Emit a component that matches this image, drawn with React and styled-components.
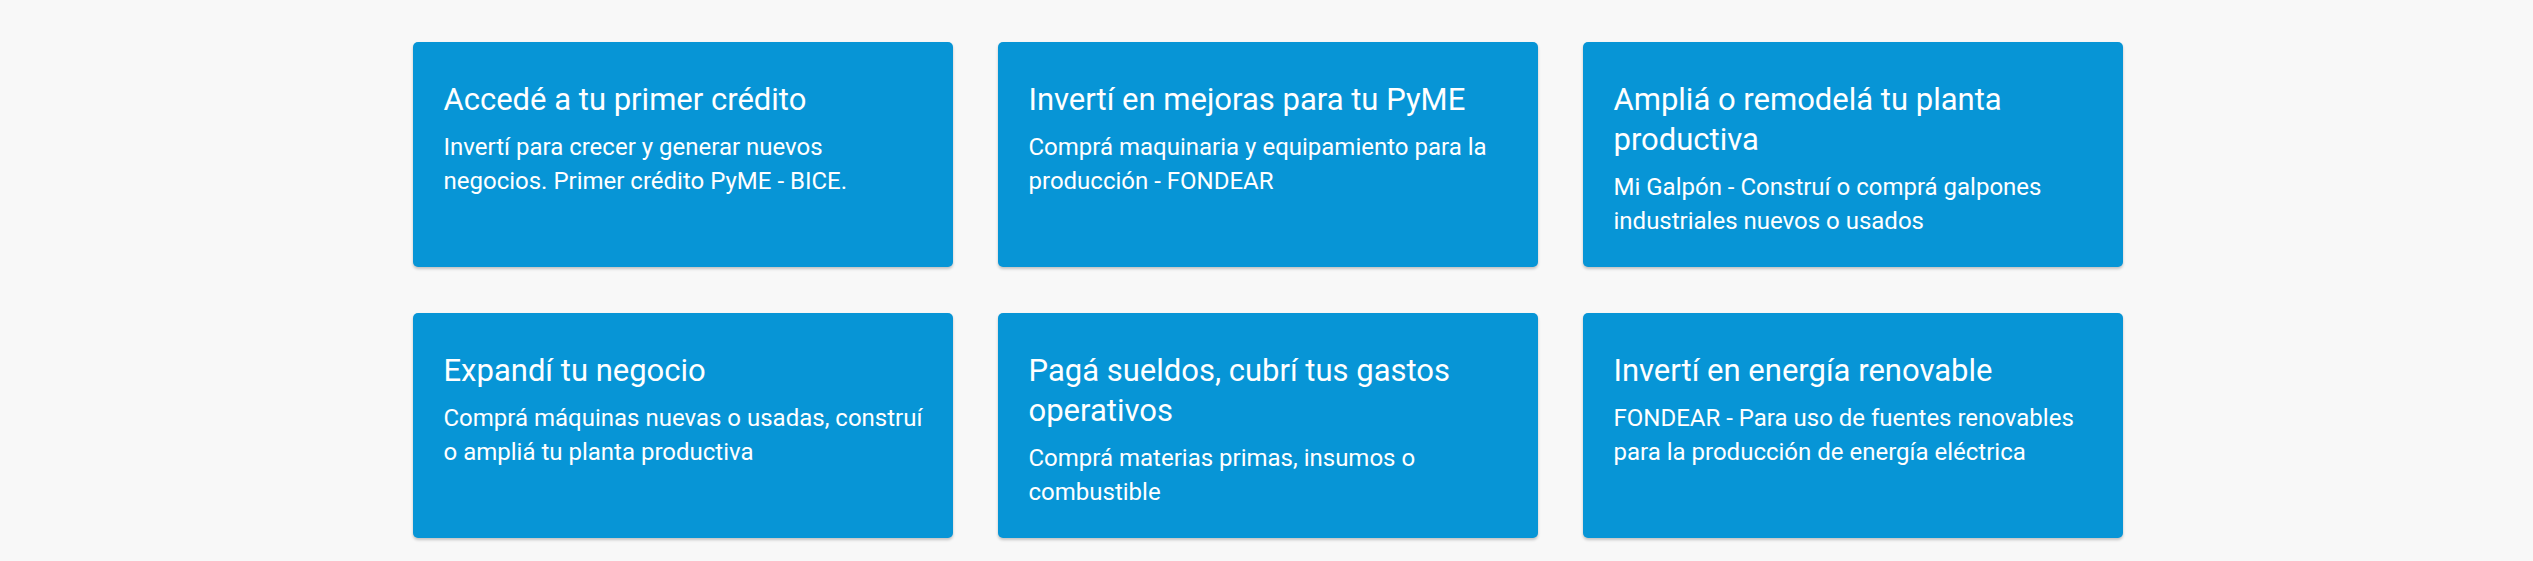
import React from "react";
import styled, { createGlobalStyle } from "styled-components";

const GlobalStyle = createGlobalStyle`
  html, body {
    margin: 0;
    padding: 0;
    background: #f8f8f8;
    font-family: Roboto, "Liberation Sans", Arial, sans-serif;
  }
`;

// maxText: ancho máximo del texto cuando hace falta forzar el corte de línea
const cards = [
  {
    title: "Accedé a tu primer crédito",
    text: "Invertí para crecer y generar nuevos negocios. Primer crédito PyME - BICE.",
    maxText: 450,
  },
  {
    title: "Invertí en mejoras para tu PyME",
    text: "Comprá maquinaria y equipamiento para la producción - FONDEAR",
  },
  {
    title: "Ampliá o remodelá tu planta productiva",
    text: "Mi Galpón - Construí o comprá galpones industriales nuevos o usados",
  },
  {
    title: "Expandí tu negocio",
    text: "Comprá máquinas nuevas o usadas, construí o ampliá tu planta productiva",
  },
  {
    title: "Pagá sueldos, cubrí tus gastos operativos",
    text: "Comprá materias primas, insumos o combustible",
  },
  {
    title: "Invertí en energía renovable",
    text: "FONDEAR - Para uso de fuentes renovables para la producción de energía eléctrica",
  },
];

const Page = styled.div`
  padding: 42px 0 23px;
`;

const Grid = styled.div`
  display: grid;
  grid-template-columns: repeat(3, 540px);
  column-gap: 45px;
  row-gap: 46px;
  justify-content: center;
  padding-left: 2px;
`;

const Card = styled.a`
  display: block;
  background: #0795d6;
  border-radius: 5px;
  box-shadow: 0 2px 3px rgba(0, 0, 0, 0.22);
  padding: 38px 18px 29px 31px;
  color: #fff;
  text-decoration: none;
  cursor: pointer;
`;

const Title = styled.h3`
  margin: 0 0 11px;
  font-size: 31px;
  line-height: 40px;
  font-weight: 400;
`;

const Text = styled.p`
  margin: 0;
  max-width: ${(props) => (props.$max ? `${props.$max}px` : "none")};
  font-size: 24px;
  line-height: 33.5px;
  font-weight: 400;
`;

const App = () => {
  return (
    <>
      <GlobalStyle />
      <Page>
        <Grid>
          {cards.map((c) => (
            <Card key={c.title}>
              <Title>{c.title}</Title>
              <Text $max={c.maxText}>{c.text}</Text>
            </Card>
          ))}
        </Grid>
      </Page>
    </>
  );
};

export default App;
